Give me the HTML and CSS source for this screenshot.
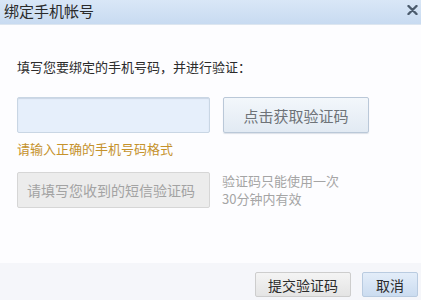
FILE: index.html
```html
<!DOCTYPE html>
<html lang="zh-CN">
<head>
<meta charset="utf-8">
<link rel="stylesheet" href="styles.css">
</head>
<body>
<div class="dialog">
  <div class="titlebar">
    <span class="title">绑定手机帐号</span>
    <svg class="close" width="11" height="10" viewBox="0 0 11 10"><path d="M1.5 1 L9.5 9 M9.5 1 L1.5 9" stroke="#4b5b6d" stroke-width="2.4" stroke-linecap="round"/></svg>
  </div>
  <div class="content">
    <p class="intro">填写您要绑定的手机号码，并进行验证：</p>
    <div class="row row-phone">
      <div class="field field-phone"></div>
      <div class="btn btn-getcode">点击获取验证码</div>
    </div>
    <p class="error">请输入正确的手机号码格式</p>
    <div class="row row-code">
      <div class="field field-code">请填写您收到的短信验证码</div>
      <div class="hint"><div>验证码只能使用一次</div><div>30分钟内有效</div></div>
    </div>
  </div>
  <div class="footer">
    <div class="btn btn-submit">提交验证码</div>
    <div class="btn btn-cancel">取消</div>
  </div>
</div>
</body>
</html>
```

FILE: styles.css
```css
html, body {
  margin: 0;
  padding: 0;
  background: #ffffff;
}
.dialog {
  width: 421px;
  height: 300px;
  display: flex;
  flex-direction: column;
  font-family: "Noto Sans CJK SC", "Liberation Sans", sans-serif;
  background: #fdfdff;
  overflow: hidden;
}
.titlebar {
  height: 24px;
  flex: none;
  display: flex;
  align-items: center;
  justify-content: space-between;
  padding: 0 3px 0 4px;
  background: linear-gradient(#d9e7f7, #c8dbf1);
  border-bottom: 1px solid #dde6f0;
}
.title {
  font-size: 15px;
  line-height: 20px;
  color: #2a2a2a;
  margin-top: -2px;
}
.close {
  display: block;
  margin-top: -5px;
}
.content {
  padding: 0 0 0 17px;
  flex: 1;
}
.intro {
  margin: 32px 0 0 0;
  font-size: 13px;
  line-height: 20px;
  color: #2b2b2b;
}
.row {
  display: flex;
  align-items: flex-start;
}
.row-phone {
  margin-top: 20px;
}
.field {
  width: 193px;
  height: 36px;
  box-sizing: border-box;
  border-radius: 2px;
}
.field-phone {
  background: #e6effb;
  border: 1px solid #c9d6e4;
  box-shadow: inset 0 1px 1px rgba(120,140,160,0.25);
}
.btn {
  box-sizing: border-box;
  display: flex;
  align-items: center;
  justify-content: center;
  border-radius: 2px;
}
.btn-getcode {
  margin-left: 13px;
  width: 146px;
  height: 36px;
  font-size: 15px;
  color: #6e7378;
  background: linear-gradient(#f3f7fb, #e2eaf3);
  border: 1px solid #bac8d8;
  box-shadow: 0 1px 1px rgba(120,140,160,0.25);
}
.error {
  margin: 6px 0 0 0;
  font-size: 13px;
  line-height: 20px;
  color: #c5922c;
}
.row-code {
  margin-top: 13px;
}
.field-code {
  background: #ececec;
  border: 1px solid #d6d6d6;
  font-size: 14px;
  color: #a3a3a3;
  line-height: 34px;
  padding-left: 9px;
  white-space: nowrap;
}
.hint {
  margin-left: 12px;
  margin-top: 0;
  font-size: 13px;
  line-height: 18px;
  color: #a5a5a5;
}
.footer {
  flex: none;
  height: 37px;
  background: #f5f6fa;
  display: flex;
  justify-content: flex-end;
  align-items: flex-start;
  padding: 9px 3px 0 0;
  box-sizing: border-box;
  gap: 11px;
}
.btn-submit {
  width: 96px;
  height: 25px;
  font-size: 14px;
  color: #2b2b2b;
  background: linear-gradient(#f4f4f4, #e4e4e4);
  border: 1px solid #cdcdcd;
}
.btn-cancel {
  width: 56px;
  height: 25px;
  font-size: 14px;
  color: #2b2b2b;
  background: linear-gradient(#e3edf9, #cbdcf0);
  border: 1px solid #b9cbe0;
}
```
